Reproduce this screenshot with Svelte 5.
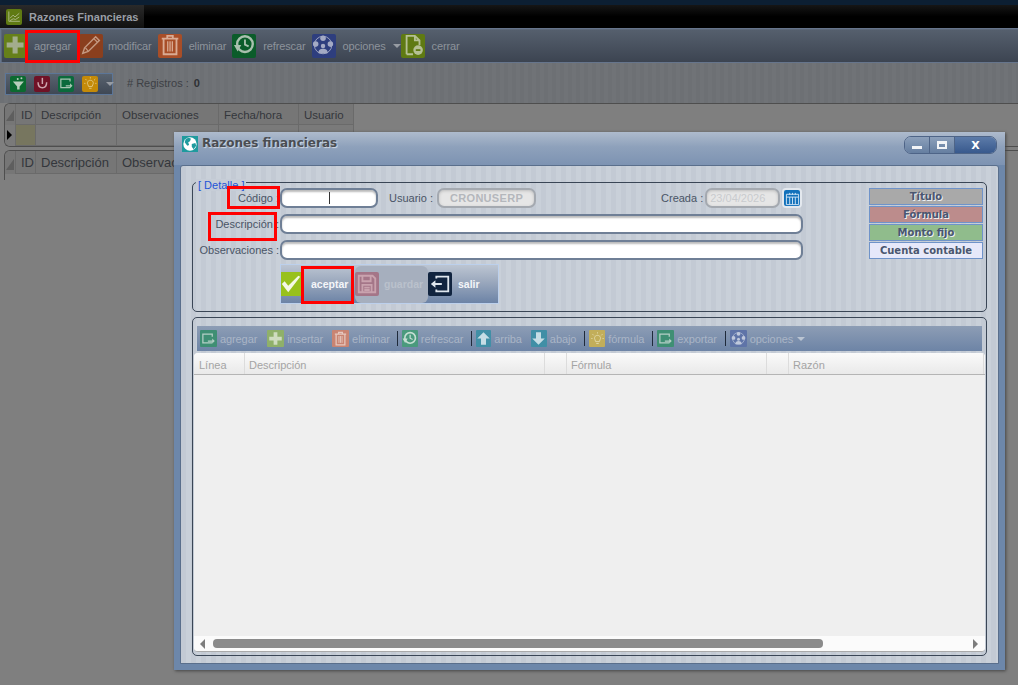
<script>
  // main toolbar of the page (dimmed behind the modal)
  const mainTools = [
    { icon: 'plus', label: 'agregar', bg: '#66801a', fg: '#a3ad8c', cls: 'first' },
    { icon: 'pencil', label: 'modificar', bg: '#8a3f1e', fg: '#c39880', cls: 'tight' },
    { icon: 'trash', label: 'eliminar', bg: '#a84e28', fg: '#d9ab94' },
    { icon: 'clock', label: 'refrescar', bg: '#0b5c2a', fg: '#a9c0ae' },
    { icon: 'network', label: 'opciones', bg: '#2e3e7e', fg: '#a4aac4', caret: true },
    { icon: 'docminus', label: 'cerrar', bg: '#5f7a12', fg: '#b5c094' }
  ];

  const detailTools = [
    { icon: 'export', label: 'agregar', bg: '#3f8f74', fg: '#b5d0c6', w: 17, pad: 10 },
    { icon: 'plus', label: 'insertar', bg: '#8fb06a', fg: '#cfdcc0', w: 17, pad: 9 },
    { icon: 'trash', label: 'eliminar', bg: '#c98472', fg: '#e6c8bf', w: 17, pad: 7, sep: true },
    { icon: 'clock', label: 'refrescar', bg: '#4a9a7d', fg: '#c6ded3', w: 16, pad: 8, sep: true },
    { icon: 'up', label: 'arriba', bg: '#418fa6', fg: '#c6dde5', w: 15, pad: 9 },
    { icon: 'down', label: 'abajo', bg: '#418fa6', fg: '#c6dde5', w: 16, pad: 8, sep: true },
    { icon: 'bulb', label: 'fórmula', bg: '#c2ae5a', fg: '#e4dcae', w: 16, pad: 8, sep: true },
    { icon: 'export', label: 'exportar', bg: '#3f8f74', fg: '#b5d0c6', w: 17, pad: 8, sep: true },
    { icon: 'network', label: 'opciones', bg: '#5f74a8', fg: '#bfc8dc', w: 17, pad: 0, caret: true }
  ];

  const filterTools = [
    { icon: 'funnel', bg: '#0b6a30', fg: '#b7cdbb' },
    { icon: 'undo', bg: '#701226', fg: '#cda5ad' },
    { icon: 'export', bg: '#0b6a3c', fg: '#a9c5b3' },
    { icon: 'bulb', bg: '#c48a08', fg: '#e4cf8c' }
  ];

  const gridCols = [
    { label: 'ID', w: 20 },
    { label: 'Descripción', w: 81 },
    { label: 'Observaciones', w: 102 },
    { label: 'Fecha/hora', w: 80 },
    { label: 'Usuario', w: 55 }
  ];

  const detailCols = [
    { label: 'Línea', w: 51 },
    { label: 'Descripción', w: 300 },
    { label: '', w: 22 },
    { label: 'Fórmula', w: 200 },
    { label: '', w: 22 },
    { label: 'Razón', w: 195 }
  ];

  const legend = [
    { label: 'Título', cls: 'titulo' },
    { label: 'Fórmula', cls: 'formula' },
    { label: 'Monto fijo', cls: 'monto' },
    { label: 'Cuenta contable', cls: 'cuenta' }
  ];
</script>

{#snippet glyph(name, fg)}
  <svg viewBox="0 0 24 24" fill="none" stroke={fg} stroke-width="2">
    {#if name === 'plus'}
      <path d="M9 2h6v7h7v6h-7v7H9v-7H2V9h7z" fill={fg} stroke="none" />
    {:else if name === 'pencil'}
      <path d="M3 21l2-6L17 3l4 4L9 19z" stroke-width="1.6" />
      <path d="M15 5l4 4M6 15l3 4" stroke-width="1.4" />
    {:else if name === 'trash'}
      <path d="M3 5h18M9 5V2h6v3" />
      <path d="M5 5v17h14V5" />
      <path d="M9.5 8v11M14.5 8v11M12 8v11" stroke-width="1.4" />
    {:else if name === 'clock'}
      <circle cx="13" cy="11" r="8.5" stroke-width="2.6" />
      <path d="M13 6v5.5l4 2" />
      <path d="M1 12h8l-4 7z" fill={fg} stroke="none" />
    {:else if name === 'network'}
      <circle cx="12" cy="12" r="9.5" stroke-width="1" />
      <circle cx="12" cy="4.5" r="3" fill={fg} stroke="none" />
      <circle cx="4" cy="11" r="3" fill={fg} stroke="none" />
      <circle cx="20" cy="11" r="3" fill={fg} stroke="none" />
      <circle cx="12" cy="13" r="2.4" fill={fg} stroke="none" />
      <path d="M7 21c0-4 2-5 5-5s5 1 5 5z" fill={fg} stroke="none" />
    {:else if name === 'docminus'}
      <path d="M5 22V2h9l5 5v5M5 22h7M14 2v5h5" />
      <circle cx="17.5" cy="17.5" r="5.2" fill={fg} stroke="none" />
      <path d="M15 17.5h5" stroke="#5f7a12" />
    {:else if name === 'funnel'}
      <path d="M3 9h18l-7 8v5h-4v-5z" fill={fg} stroke="none" />
      <circle cx="11" cy="5" r="1.6" fill={fg} stroke="none" />
      <circle cx="17" cy="3.5" r="1.6" fill={fg} stroke="none" />
    {:else if name === 'undo'}
      <path d="M5 10c0 6 3 9 7 9s7-3 7-9" stroke-width="2.4" />
      <path d="M12 3v10" stroke-width="2.4" />
    {:else if name === 'export'}
      <path d="M18 9V5H3v14h15" />
      <path d="M11 15h7v-3l4 4-4 4v-3h-7z" fill={fg} stroke="none" />
    {:else if name === 'bulb'}
      <path d="M8 14c-2-3 0-7 4-7s6 4 4 7l-1 3H9z" stroke-width="1.4" />
      <path d="M10 20h4M12 2v2M4 5l2 2M20 5l-2 2M2 12h2M20 12h2" stroke-width="1.4" />
    {:else if name === 'up'}
      <path d="M12 2l10 10h-6v10H8V12H2z" fill={fg} stroke="none" />
    {:else if name === 'down'}
      <path d="M12 22l10-10h-6V2H8v10H2z" fill={fg} stroke="none" />
    {:else if name === 'floppy'}
      <path d="M3 3h15l3 3v15H3zM7 3v6h9V3M7 21v-8h10v8M9 16h6M9 18.5h6" />
    {:else if name === 'exit'}
      <path d="M8 6V4h13v16H8v-2" />
      <path d="M2 12l5-4v3h7v2H7v3z" fill={fg} stroke="none" />
    {:else if name === 'check'}
      <path d="M2 12l7 9L22 4l-2-1L9 14l-4-5z" fill={fg} stroke="none" />
    {:else if name === 'chart'}
      <path d="M3 4v16h18" stroke-width="1.4" />
      <path d="M5 15l5-5 3 3 7-6M5 19l5-3 4 1 6-4" stroke-width="1.4" />
    {/if}
  </svg>
{/snippet}

{#snippet tile(name, bg, fg)}
  <span class="tile" style="background:{bg}">{@render glyph(name, fg)}</span>
{/snippet}

{#snippet caret()}
  <span class="caret"></span>
{/snippet}

<div class="page">
  <div class="topbar">
    <div class="tab">
      {@render tile('chart', '#5f7a12', '#b5c094')}
      <span>Razones Financieras</span>
    </div>
  </div>

  <nav class="toolbar">
    {#each mainTools as t}
      <div class="tool {t.cls ?? ''}">
        {@render tile(t.icon, t.bg, t.fg)}
        <span>{t.label}</span>
        {#if t.caret}{@render caret()}{/if}
      </div>
    {/each}
  </nav>

  <div class="filterbar">
    <div class="filtergroup">
      {#each filterTools as t}
        {@render tile(t.icon, t.bg, t.fg)}
      {/each}
      {@render caret()}
    </div>
    <div class="count"># Registros : <b>0</b></div>
  </div>

  <section class="grid">
    <div class="gridhead">
      <span class="corner"></span>
      {#each gridCols as c}
        <span class="gcol" style="width:{c.w}px">{c.label}</span>
      {/each}
    </div>
    <div class="gridrow">
      <span class="marker"></span>
      {#each gridCols as c, i}
        <span class="gcell" class:idcell={i === 0} style="width:{c.w}px"></span>
      {/each}
    </div>
  </section>

  <section class="grid second">
    <div class="gridhead">
      <span class="corner"></span>
      {#each gridCols as c}
        <span class="gcol" style="width:{c.w}px">{c.label}</span>
      {/each}
    </div>
  </section>

  <div class="dialog">
    <header class="dlghead">
      <span class="globe">
        <svg viewBox="0 0 18 18">
          <rect width="18" height="18" fill="#1f9a9e" />
          <circle cx="9" cy="9" r="7.5" fill="#fff" />
          <path d="M4 4c2-2 5-2 6-1l-1 3-2 1 1 3-2 1-3-4zM11 9l4-1 1 3-3 4-2-3z" fill="#1f9a9e" />
        </svg>
      </span>
      <h1>Razones financieras</h1>
      <div class="winbtns">
        <span class="wb"><i class="wmin"></i></span>
        <span class="wb"><i class="wmax"></i></span>
        <span class="wb close">X</span>
      </div>
    </header>

    <div class="dlgbody">
      <div class="fieldset detalle">
        <span class="legendtitle">[ Detalle ]</span>
        <div class="form">
          <div class="row">
            <label class="lbl" for="cod">Código :</label>
            <div class="field codigo"><input id="cod" class="inp" /><i class="cursor"></i></div>
            <span class="lbl2 usuario">Usuario :</span>
            <span class="ro user">CRONUSERP</span>
            <span class="lbl2 creada">Creada :</span>
            <span class="ro date">23/04/2026</span>
            <span class="cal">
              <svg viewBox="0 0 16 16" fill="none" stroke="#cfe4f5">
                <path d="M1.5 3.5h13v11h-13zM1.5 6.5h13M5 2v2M8 2v2M11 2v2M5 6.5v8M8 6.5v8M11 6.5v8" />
              </svg>
            </span>
          </div>
          <div class="row">
            <label class="lbl" for="des">Descripción :</label>
            <input id="des" class="inp wide" />
          </div>
          <div class="row">
            <label class="lbl" for="obs">Observaciones :</label>
            <input id="obs" class="inp wide" />
          </div>
          <div class="actions">
            <span class="act-icon check">{@render glyph('check', '#f4f8e6')}</span>
            <span class="act-text">aceptar</span>
            <div class="disabled">
              <span class="act-icon floppy">{@render glyph('floppy', '#c9a3ae')}</span>
              <span class="act-text">guardar</span>
            </div>
            <span class="act-icon exit">{@render glyph('exit', '#dfe6ee')}</span>
            <span class="act-text">salir</span>
          </div>
        </div>
        <div class="legendlist">
          {#each legend as l}
            <div class="lg {l.cls}">{l.label}</div>
          {/each}
        </div>
      </div>

      <div class="fieldset lines">
        <div class="linebar">
          {#each detailTools as t}
            <div class="ltool" style="padding-right:{t.pad}px">
              <span class="ltile" style="background:{t.bg};width:{t.w}px">{@render glyph(t.icon, t.fg)}</span>
              <span>{t.label}</span>
              {#if t.caret}{@render caret()}{/if}
            </div>
            {#if t.sep}<i class="sep"></i>{/if}
          {/each}
        </div>
        <div class="table">
          <div class="thead">
            {#each detailCols as c}
              <span class="th" style="width:{c.w}px">{c.label}</span>
            {/each}
          </div>
          <div class="tbody"></div>
          <div class="hscroll">
            <span class="arrow left"></span>
            <div class="track"><span class="thumb"></span></div>
            <span class="arrow right"></span>
          </div>
        </div>
      </div>
    </div>
  </div>

  <i class="mark m-agregar"></i>
  <i class="mark m-codigo"></i>
  <i class="mark m-desc"></i>
  <i class="mark m-aceptar"></i>
</div>

<style>
  :global(body) {
    margin: 0;
    background: #7f7f7f;
  }

  .page {
    position: relative;
    width: 1018px;
    height: 685px;
    overflow: hidden;
    background: #7f7f7f;
    font-family: "Liberation Sans", Arial, sans-serif;
    font-size: 12px;
  }

  .topbar {
    height: 23px;
    border-top: 5px solid #0c1f33;
    background: linear-gradient(#161616, #000 50%);
  }

  .tab {
    display: flex;
    align-items: center;
    gap: 7px;
    width: 138px;
    height: 23px;
    padding-left: 6px;
    background: linear-gradient(#2a2a2a, #111);
    color: #9a9fa6;
    font-size: 11px;
    font-weight: bold;
  }

  .tab .tile {
    width: 16px;
    height: 16px;
  }

  .tile {
    display: inline-flex;
    flex: none;
    align-items: center;
    justify-content: center;
    width: 24px;
    height: 24px;
    border-radius: 2px;
  }

  .tile svg {
    width: 92%;
    height: 92%;
  }

  .toolbar {
    display: flex;
    align-items: center;
    box-sizing: border-box;
    height: 35px;
    padding-left: 3px;
    border: 1px solid #66758c;
    border-width: 1px 0 1px 1px;
    background: linear-gradient(#56606e, #3c4451);
    color: #8d939b;
    font-size: 11px;
    letter-spacing: -0.12px;
    box-shadow: inset 1px 1px 0 #5b6677;
  }

  .tool {
    display: flex;
    align-items: center;
    gap: 7px;
    padding-right: 6px;
  }

  .tool.first {
    padding-right: 8px;
    gap: 8px;
  }

  .tool.first .tile {
    width: 22px;
  }

  .tool.tight {
    gap: 5px;
  }

  .tool .caret {
    margin-right: -6px;
  }

  .caret {
    flex: none;
    width: 0;
    height: 0;
    border: 4px solid transparent;
    border-top: 4px solid #979ca3;
    border-bottom: 0;
  }

  .filterbar {
    display: flex;
    align-items: center;
    gap: 14px;
    height: 40px;
    padding-left: 5px;
    background: repeating-linear-gradient(90deg, #6d7074 0 4px, #707377 4px 8px);
    color: #3f4247;
  }

  .filtergroup {
    display: flex;
    align-items: center;
    gap: 8px;
    box-sizing: border-box;
    height: 22px;
    width: 108px;
    margin-top: 1px;
    padding-left: 4px;
    border: 1px solid #5c7698;
    background: linear-gradient(#59636f, #3f4855);
  }

  .filtergroup .tile {
    width: 16px;
    height: 16px;
  }

  .count {
    font-size: 11px;
    color: #3d4045;
  }

  .count b {
    margin-left: 2px;
    color: #2e3035;
  }

  .grid {
    box-sizing: border-box;
    height: 44px;
    margin-left: 4px;
    border: 1px solid #4e4e4e;
    border-width: 1px 0 1px 1px;
    border-radius: 6px 0 0 6px;
    overflow: hidden;
    color: #34373c;
    font-size: 11.5px;
  }

  .grid.second {
    height: 30px;
    margin-top: 3px;
    border-bottom: 0;
    border-radius: 6px 0 0 0;
    font-size: 13px;
  }

  .gridhead,
  .gridrow {
    display: flex;
    height: 21px;
    width: 348px;
    background: #767676;
  }

  .grid.second .gridhead {
    height: 23px;
  }

  .grid.second .gcol {
    padding-top: 5px;
  }

  .gridrow {
    background: #7a7a7a;
  }

  .corner,
  .marker {
    position: relative;
    flex: none;
    width: 10px;
    border-right: 1px solid #6a6a6a;
  }

  .corner::after {
    content: "";
    position: absolute;
    left: 1px;
    bottom: 4px;
    border-style: solid;
    border-color: transparent;
    border-width: 0 0 11px 8px;
    border-bottom-color: #5e5e5e;
  }

  .marker::after {
    content: "";
    position: absolute;
    left: 2px;
    top: 5px;
    border: 5px solid transparent;
    border-left-color: #000;
    border-right: 0;
  }

  .gcol {
    box-sizing: border-box;
    flex: none;
    padding: 4px 0 0 5px;
    border-right: 1px solid #6a6a6a;
    border-bottom: 1px solid #6a6a6a;
    line-height: 14px;
    white-space: nowrap;
  }

  .gcell {
    box-sizing: border-box;
    flex: none;
    border-right: 1px solid #6a6a6a;
    border-bottom: 1px solid #6a6a6a;
  }

  .idcell {
    background: #77765f;
  }

  .dialog {
    position: absolute;
    left: 174px;
    top: 132px;
    display: flex;
    flex-direction: column;
    box-sizing: border-box;
    width: 831px;
    height: 538px;
    padding: 0 6px 6px;
    background: #6d87aa;
    box-shadow: 1px 1px 3px #444;
  }

  .dlghead {
    display: flex;
    flex: none;
    align-items: flex-start;
    gap: 4px;
    box-sizing: border-box;
    height: 33px;
    margin: 0 -6px;
    padding: 4px 8px 0;
    background: linear-gradient(#aebbcd, #8ea1bb 45%, #7d93b2);
  }

  .globe {
    width: 16px;
    height: 16px;
  }

  .globe svg {
    display: block;
    width: 16px;
    height: 16px;
  }

  .dlghead h1 {
    flex: 1;
    margin: 0;
    font-family: "DejaVu Sans", sans-serif;
    font-size: 12px;
    font-weight: bold;
    line-height: 15px;
    color: #4a4d52;
    text-shadow: 1px 1px 1px #d4dbe5;
  }

  .winbtns {
    display: flex;
    box-sizing: border-box;
    height: 18px;
    border: 1px solid #4e6487;
    border-radius: 7px;
    overflow: hidden;
  }

  .wb {
    display: flex;
    align-items: center;
    justify-content: center;
    box-sizing: border-box;
    width: 25px;
    border-right: 1px solid #4e6487;
    background: linear-gradient(#8ca0bb, #657ea0);
  }

  .wb.close {
    width: 41px;
    border-right: 0;
    background: linear-gradient(#5c7ba9, #38598d);
    color: #fff;
    font-family: "DejaVu Sans", sans-serif;
    font-size: 11px;
    font-weight: bold;
  }

  .wmin {
    width: 10px;
    height: 3px;
    margin-top: 5px;
    background: #f2f4f7;
  }

  .wmax {
    box-sizing: border-box;
    width: 10px;
    height: 8px;
    border: 2px solid #f2f4f7;
    border-top-width: 3px;
  }

  .dlgbody {
    display: flex;
    flex: 1;
    flex-direction: column;
    gap: 5px;
    box-sizing: border-box;
    padding: 16px 11px 7px;
    border: 1px solid #5a6f8c;
    border-radius: 3px 3px 0 0;
    background: repeating-linear-gradient(90deg, #c3cad4 0 5px, #c9d0d9 5px 10px);
  }

  .fieldset {
    position: relative;
    box-sizing: border-box;
    border: 1px solid #3a4656;
    border-radius: 5px;
  }

  .detalle {
    display: flex;
    flex: none;
    justify-content: space-between;
    height: 130px;
    padding: 5px 3px 0 0;
  }

  .legendtitle {
    position: absolute;
    left: 3px;
    top: -4px;
    padding: 0 2px;
    background: #c6cdd7;
    color: #1e54d6;
    font-size: 11px;
    line-height: 12px;
  }

  .form {
    display: flex;
    flex-direction: column;
    gap: 6px;
    width: 610px;
  }

  .row {
    display: flex;
    align-items: center;
    height: 20px;
    color: #4a5566;
    font-size: 11px;
  }

  .lbl {
    flex: none;
    width: 86px;
    margin-right: 1px;
    text-align: right;
    white-space: nowrap;
  }

  .field {
    position: relative;
  }

  .inp {
    display: block;
    box-sizing: border-box;
    width: 98px;
    height: 20px;
    margin: 0;
    padding: 0 6px;
    border: 2px solid #6f7f96;
    border-radius: 7px;
    background: #fff;
    box-shadow: inset 0 2px 2px #bbb;
    outline: none;
  }

  .inp.wide {
    width: 523px;
  }

  .cursor {
    position: absolute;
    left: 49px;
    top: 4px;
    width: 1px;
    height: 12px;
    background: #333;
  }

  .lbl2 {
    white-space: nowrap;
  }

  .usuario {
    margin-left: 11px;
  }

  .ro {
    display: flex;
    align-items: center;
    justify-content: center;
    box-sizing: border-box;
    height: 20px;
    border: 2px solid #a4a9b0;
    border-radius: 7px;
    background: #e6e6e6;
    color: #b4b7bc;
    white-space: nowrap;
    box-shadow: inset 0 1px 3px #bdbdbd;
  }

  .user {
    width: 99px;
    margin-left: 4px;
    font-weight: bold;
    font-size: 11px;
    letter-spacing: 0.3px;
  }

  .creada {
    margin-left: 125px;
  }

  .date {
    justify-content: flex-start;
    width: 75px;
    margin-left: 2px;
    padding-left: 3px;
    color: #c9cbce;
    font-size: 11px;
  }

  .cal {
    display: flex;
    align-items: center;
    justify-content: center;
    box-sizing: border-box;
    width: 20px;
    height: 20px;
    margin-left: 2px;
    border: 2px solid #e3e8ee;
    border-radius: 4px;
    background: #1271bb;
  }

  .cal svg {
    width: 15px;
    height: 15px;
  }

  .actions {
    display: flex;
    align-items: center;
    box-sizing: border-box;
    width: 219px;
    height: 40px;
    margin: -2px 0 0 87px;
    border: 1px solid #bcd0ec;
    background: linear-gradient(#bcc5d2, #9eabbf 40%, #6c83a6);
    color: #f4f6f9;
    font-size: 10.5px;
    font-weight: bold;
  }

  .act-icon {
    display: flex;
    flex: none;
    align-items: center;
    justify-content: center;
    width: 20px;
    height: 24px;
    overflow: hidden;
  }

  .act-icon svg {
    flex: none;
    width: 22px;
    height: 22px;
  }

  .check {
    background: #98c11c;
  }

  .act-text {
    flex: none;
  }

  .actions > .act-text:nth-child(2) {
    width: 44px;
    padding-left: 10px;
  }

  .disabled {
    display: flex;
    align-items: center;
    box-sizing: border-box;
    width: 73px;
    height: 37px;
    border-radius: 6px;
    background: #a6afbe;
    color: #bac1cc;
  }

  .floppy {
    width: 24px;
    border-radius: 2px;
    background: #a47688;
  }

  .disabled .act-text {
    margin-left: 5px;
  }

  .exit {
    width: 24px;
    border-radius: 2px;
    background: #11243f;
  }

  .exit + .act-text {
    margin-left: 6px;
  }

  .legendlist {
    display: flex;
    flex-direction: column;
    gap: 1px;
    width: 114px;
  }

  .lg {
    box-sizing: border-box;
    height: 17px;
    border: 1px solid #6f93c9;
    color: #4a5670;
    font-family: "DejaVu Sans", sans-serif;
    font-size: 10px;
    font-weight: bold;
    line-height: 16px;
    text-align: center;
    text-shadow: 1px 1px 0 #eef0f4;
  }

  .titulo {
    background: #a9a9a9;
  }

  .formula {
    background: #bc8c8c;
  }

  .monto {
    background: #90bc8c;
  }

  .cuenta {
    background: #e6e8fa;
  }

  .lines {
    display: flex;
    flex: 1;
    flex-direction: column;
    gap: 2px;
    padding: 8px 1px 3px;
  }

  .linebar {
    display: flex;
    flex: none;
    align-items: center;
    height: 25px;
    margin: 0 3px;
    padding-left: 3px;
    background: linear-gradient(#8d9db5, #6d84a6);
    color: #aab5c6;
    font-size: 11px;
    letter-spacing: -0.1px;
  }

  .ltool {
    display: flex;
    align-items: center;
    gap: 3px;
  }

  .ltool:last-child .caret {
    margin-left: 1px;
    border-top-color: #bac4d2;
  }

  .ltile {
    display: flex;
    flex: none;
    align-items: center;
    justify-content: center;
    height: 17px;
    border-radius: 1px;
  }

  .ltile svg {
    width: 15px;
    height: 15px;
  }

  .sep {
    flex: none;
    width: 1px;
    height: 15px;
    margin-right: 4px;
    background: #1f2a3a;
  }

  .table {
    display: flex;
    flex: 1;
    flex-direction: column;
    border-radius: 4px;
    overflow: hidden;
    background: #efefef;
    border-bottom: 1px solid #a9a9a9;
  }

  .thead {
    display: flex;
    flex: none;
    box-sizing: border-box;
    height: 22px;
    border-bottom: 1px solid #b4b4b4;
    background: linear-gradient(#fafafa, #e9e9e9);
    color: #a4a4a4;
    font-size: 11px;
  }

  .th {
    box-sizing: border-box;
    flex: none;
    padding: 6px 0 0 4px;
    border-right: 1px solid #dcdcdc;
    line-height: 13px;
  }

  .th:first-child {
    padding-left: 5px;
  }

  .tbody {
    flex: 1;
  }

  .hscroll {
    display: flex;
    flex: none;
    align-items: center;
    gap: 8px;
    height: 15px;
    padding: 0 7px 0 6px;
    background: #fbfbfb;
  }

  .track {
    flex: 1;
  }

  .thumb {
    display: block;
    width: 610px;
    height: 9px;
    border-radius: 4px;
    background: #8b8b8b;
  }

  .arrow {
    flex: none;
    width: 0;
    height: 0;
    border: 5px solid transparent;
  }

  .arrow.left {
    border-left: 0;
    border-right-color: #7d7d7d;
  }

  .arrow.right {
    border-right: 0;
    border-left-color: #7d7d7d;
  }

  /* red boxes added on top of the screenshot */
  .mark {
    position: absolute;
    box-sizing: border-box;
    border: 3px solid #f00;
  }

  .m-agregar {
    left: 25px;
    top: 30px;
    width: 55px;
    height: 33px;
  }

  .m-codigo {
    left: 227px;
    top: 186px;
    width: 53px;
    height: 23px;
  }

  .m-desc {
    left: 208px;
    top: 212px;
    width: 69px;
    height: 29px;
  }

  .m-aceptar {
    left: 301px;
    top: 266px;
    width: 53px;
    height: 38px;
  }
</style>
